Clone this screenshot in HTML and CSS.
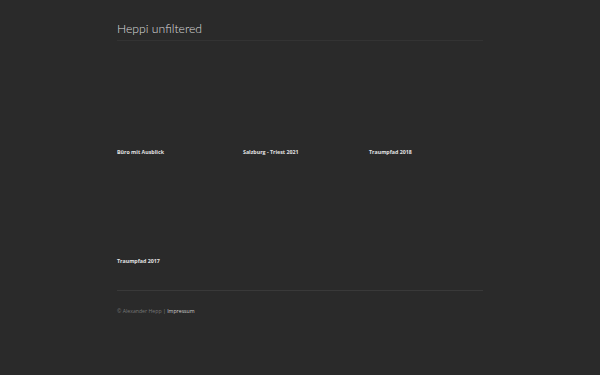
FILE: index.html
```html
<!DOCTYPE html>
<html lang="de">
<head>
	<meta charset="UTF-8" />
	<title>Heppi unfiltered</title>
	<link rel="stylesheet" href="styles.css">
</head>
<body>
	<div class="container">
		<header class="head">
			<h1 class="title">Heppi unfiltered</h1>
		</header>
		<div class="albums">
			<div class="album"><div class="cover"></div><div class="label">Büro mit Ausblick</div></div>
			<div class="album"><div class="cover"></div><div class="label">Salzburg - Triest 2021</div></div>
			<div class="album"><div class="cover"></div><div class="label">Traumpfad 2018</div></div>
			<div class="album"><div class="cover"></div><div class="label">Traumpfad 2017</div></div>
		</div>
		<footer class="foot">
			<span class="copy">© Alexander Hepp</span> <span class="sep">|</span> <a href="#" class="imprint">Impressum</a>
		</footer>
	</div>
</body>
</html>
```

FILE: styles.css
```css
html, body {
	margin: 0;
	padding: 0;
}
body {
	background-color: #2a2a2a;
	font-family: "Open Sans", "Liberation Sans", sans-serif;
	color: #dddddd;
}
.container {
	width: 366px;
	margin: 0 auto;
}
.head {
	padding-top: 21px;
	padding-bottom: 3px;
	border-bottom: 1px solid #333333;
}
.title {
	margin: 0;
	font-family: "Lato", "Liberation Sans", sans-serif;
	font-weight: 300;
	font-size: 12.2px;
	line-height: 16px;
	color: #dcdcdc;
}
.albums {
	display: grid;
	grid-template-columns: repeat(3, 114px);
	column-gap: 12px;
	row-gap: 1px;
	margin-top: 7px;
}
.cover {
	height: 100px;
}
.label {
	font-size: 5.3px;
	font-weight: 700;
	line-height: 8px;
	color: #e2e2e2;
}
.foot {
	margin-top: 25px;
	border-top: 1px solid #393939;
	padding-top: 16px;
	font-size: 5.2px;
	line-height: 8px;
	color: #777777;
}
.sep {
	color: #888888;
}
.imprint {
	color: #cfcfcf;
	text-decoration: none;
}
```
